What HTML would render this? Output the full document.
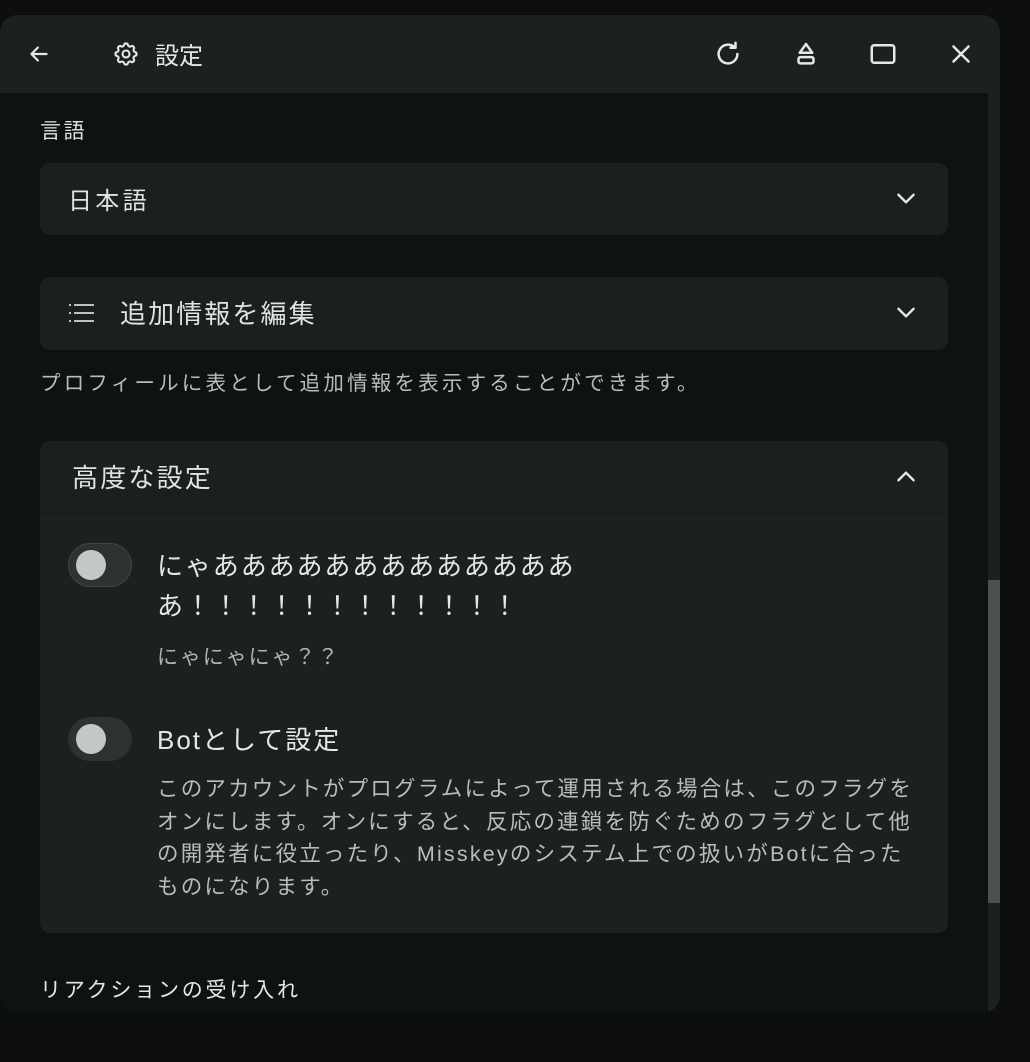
<!DOCTYPE html>
<html><head><meta charset="utf-8"><style>
*{margin:0;padding:0;box-sizing:border-box}
body{width:1030px;height:1062px;background:#0c0f0e;font-family:"Liberation Sans","Noto Sans CJK JP",sans-serif;color:#dfe3e1;position:relative;overflow:hidden}
.win{position:absolute;left:0;top:15px;width:1000px;height:998px;border-radius:18px;background:#1b211f;overflow:hidden}
.hdr{position:absolute;left:0;top:0;width:1000px;height:78px;background:#1b211f}
.content{position:absolute;left:0;top:78px;width:988px;height:920px;background:#0e1211}
.track{position:absolute;left:988px;top:78px;width:12px;height:920px;background:#1b211f}
.thumb{position:absolute;left:988px;top:565px;width:12px;height:323px;background:#4b514f}
.abs{position:absolute}
.box{position:absolute;left:40px;width:908px;border-radius:10px;background:#1b1f1e}
svg{position:absolute}
.t{position:absolute;white-space:nowrap}
</style></head><body>
<div class="win">
<div class="hdr">
<svg style="left:26px;top:26px" width="26" height="26" viewBox="0 0 24 24" fill="none" stroke="#e4e8e6" stroke-width="2" stroke-linecap="round" stroke-linejoin="round"><path d="M19 12H5M11 6l-6 6 6 6"/></svg>
<svg style="left:112px;top:25px" width="28" height="28" viewBox="0 0 24 24" fill="none" stroke="#e4e8e6" stroke-width="1.8" stroke-linejoin="round"><path d="M10.3 4.3c.4-1.8 3-1.8 3.4 0a1.7 1.7 0 0 0 2.6 1.1c1.5-.9 3.3.8 2.4 2.4a1.7 1.7 0 0 0 1 2.5c1.8.4 1.8 3 0 3.4a1.7 1.7 0 0 0-1 2.6c.9 1.5-.9 3.3-2.4 2.4a1.7 1.7 0 0 0-2.6 1c-.4 1.8-3 1.8-3.4 0a1.7 1.7 0 0 0-2.5-1c-1.6.9-3.3-.9-2.4-2.4a1.7 1.7 0 0 0-1.1-2.6c-1.8-.4-1.8-3 0-3.4a1.7 1.7 0 0 0 1.1-2.5c-.9-1.6.9-3.3 2.4-2.4a1.7 1.7 0 0 0 2.5-1.1z"/><circle cx="12" cy="12" r="3"/></svg>
<div class="t" style="left:155px;top:21px;font-size:24px;color:#e4e8e6">設定</div>
<svg style="left:713px;top:24px" width="30" height="30" viewBox="0 0 24 24" fill="none" stroke="#e4e8e6" stroke-width="2" stroke-linecap="round" stroke-linejoin="round"><path d="M19.5 12a7.5 7.5 0 1 1-2.2-5.3M18 3v4h-4"/></svg>
<svg style="left:791px;top:24px" width="30" height="30" viewBox="0 0 24 24" fill="none" stroke="#e4e8e6" stroke-width="2" stroke-linejoin="round"><path d="M12 4l5 7H7z"/><rect x="6" y="14.5" width="12" height="5" rx="1.5"/></svg>
<svg style="left:868px;top:24px" width="30" height="30" viewBox="0 0 24 24" fill="none" stroke="#e4e8e6" stroke-width="2"><rect x="3" y="5" width="18" height="14" rx="2"/></svg>
<svg style="left:946px;top:24px" width="30" height="30" viewBox="0 0 24 24" fill="none" stroke="#e4e8e6" stroke-width="2" stroke-linecap="round"><path d="M6 6l12 12M18 6L6 18"/></svg>
</div>
<div class="content"></div>
<div class="track"></div><div class="thumb"></div>
</div>

<div class="t" style="left:40px;top:115px;font-size:21px;letter-spacing:2.5px">言語</div>
<div class="box" style="top:163px;height:72px"></div>
<div class="t" style="left:68px;top:181px;font-size:24px;letter-spacing:3.3px">日本語</div>
<svg style="left:893px;top:185px" width="26" height="26" viewBox="0 0 24 24" fill="none" stroke="#e4e8e6" stroke-width="2.2" stroke-linecap="round" stroke-linejoin="round"><path d="M5 9l7 7 7-7"/></svg>

<div class="box" style="top:277px;height:73px"></div>
<svg style="left:69px;top:302px" width="28" height="24" viewBox="0 0 28 24" fill="#bfc4c2"><rect x="0" y="2" width="2" height="2"/><rect x="0" y="10" width="2" height="2"/><rect x="0" y="18" width="2" height="2"/><rect x="5" y="2" width="20" height="2"/><rect x="5" y="10" width="20" height="2"/><rect x="5" y="18" width="20" height="2"/></svg>
<div class="t" style="left:120px;top:294px;font-size:26px;letter-spacing:2.1px">追加情報を編集</div>
<svg style="left:893px;top:299px" width="26" height="26" viewBox="0 0 24 24" fill="none" stroke="#e4e8e6" stroke-width="2.2" stroke-linecap="round" stroke-linejoin="round"><path d="M5 9l7 7 7-7"/></svg>
<div class="t" style="left:40px;top:366px;font-size:20.5px;letter-spacing:3.2px;color:#b9bebc">プロフィールに表として追加情報を表示することができます。</div>

<div class="abs" style="left:40px;top:441px;width:908px;height:492px;border-radius:10px;background:#1b2120"></div>
<div class="abs" style="left:40px;top:441px;width:908px;height:73px;border-radius:10px 10px 0 0;background:#1b1f1e;border-bottom:1px solid #151918"></div>
<div class="t" style="left:72px;top:458px;font-size:26px;letter-spacing:2.2px">高度な設定</div>
<svg style="left:893px;top:464px" width="26" height="26" viewBox="0 0 24 24" fill="none" stroke="#e4e8e6" stroke-width="2.2" stroke-linecap="round" stroke-linejoin="round"><path d="M5 15l7-7 7 7"/></svg>

<div class="abs" style="left:68px;top:543px;width:64px;height:44px;border-radius:22px;background:#2e3331;border:1.5px solid #414745"></div>
<div class="abs" style="left:76px;top:550px;width:30px;height:30px;border-radius:50%;background:#c4c9c7"></div>
<div class="t" style="left:157px;top:546px;font-size:26px;line-height:40px;letter-spacing:1.9px;color:#e4e8e6">にゃあああああああああああああ<br>あ！！！！！！！！！！！！</div>
<div class="t" style="left:157px;top:641px;font-size:21px;letter-spacing:1.9px;color:#b0b5b3">にゃにゃにゃ？？</div>

<div class="abs" style="left:68px;top:717px;width:64px;height:44px;border-radius:22px;background:#2e3331"></div>
<div class="abs" style="left:76px;top:724px;width:30px;height:30px;border-radius:50%;background:#c4c9c7"></div>
<div class="t" style="left:157px;top:720px;font-size:26px;letter-spacing:2px;color:#e4e8e6">Botとして設定</div>
<div class="t" style="left:157px;top:773px;font-size:21.5px;line-height:32.5px;letter-spacing:2.2px;color:#b9bebc">このアカウントがプログラムによって運用される場合は、このフラグを<br>オンにします。オンにすると、反応の連鎖を防ぐためのフラグとして他<br>の開発者に役立ったり、Misskeyのシステム上での扱いがBotに合った<br>ものになります。</div>

<div class="t" style="left:40px;top:974px;font-size:21px;letter-spacing:2.8px;color:#e4e8e6">リアクションの受け入れ</div>
</body></html>
